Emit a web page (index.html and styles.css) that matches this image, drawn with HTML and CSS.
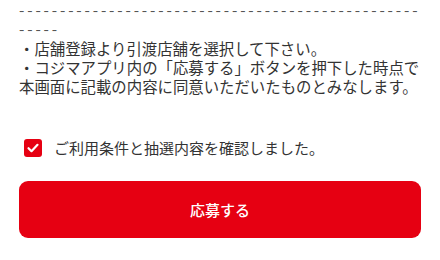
FILE: index.html
```html
<!DOCTYPE html>
<html lang="ja">
<head>
  <meta charset="UTF-8" />
  <title>応募確認</title>
  <link rel="stylesheet" href="styles.css">
</head>
<body>
  <div class="notes">
    <p class="rule">------------------------------------------------------</p>
    <p>・店舗登録より引渡店舗を選択して下さい。</p>
    <p>・コジマアプリ内の「応募する」ボタンを押下した時点で本画面に記載の内容に同意いただいたものとみなします。</p>
  </div>

  <label class="agree">
    <input type="checkbox" checked />
    <span class="box">
      <svg viewBox="0 0 18 18" width="18" height="18"><path d="M4.5 9.2l3 3 6-6.4" fill="none" stroke="#fff" stroke-width="2.2" stroke-linecap="round" stroke-linejoin="round"/></svg>
    </span>
    <span>ご利用条件と抽選内容を確認しました。</span>
  </label>

  <button class="apply">応募する</button>
</body>
</html>
```

FILE: styles.css
```css
body {
  font-family: "Noto Sans CJK JP", "Noto Sans", sans-serif;
  background: #fff;
  color: #333;
  margin: 0;
  padding: 0 19px;
}
.notes {
  font-size: 15.4px;
  line-height: 19.3px;
}
.notes p {
  margin: 0;
}
.rule {
  letter-spacing: 2.85px;
  word-break: break-all;
  color: #555;
}
.agree {
  display: flex;
  align-items: center;
  gap: 12px;
  margin: 41px 0 0 5px;
  font-size: 15px;
  line-height: 22px;
  cursor: pointer;
}
.agree input {
  display: none;
}
.box {
  width: 18px;
  height: 18px;
  background: #e60012;
  border-radius: 3px;
  display: flex;
}
.apply {
  display: block;
  width: 100%;
  height: 57px;
  margin-top: 22px;
  border: none;
  border-radius: 9px;
  background: #e60012;
  color: #fff;
  font-family: inherit;
  font-size: 15px;
  font-weight: 500;
}
```
